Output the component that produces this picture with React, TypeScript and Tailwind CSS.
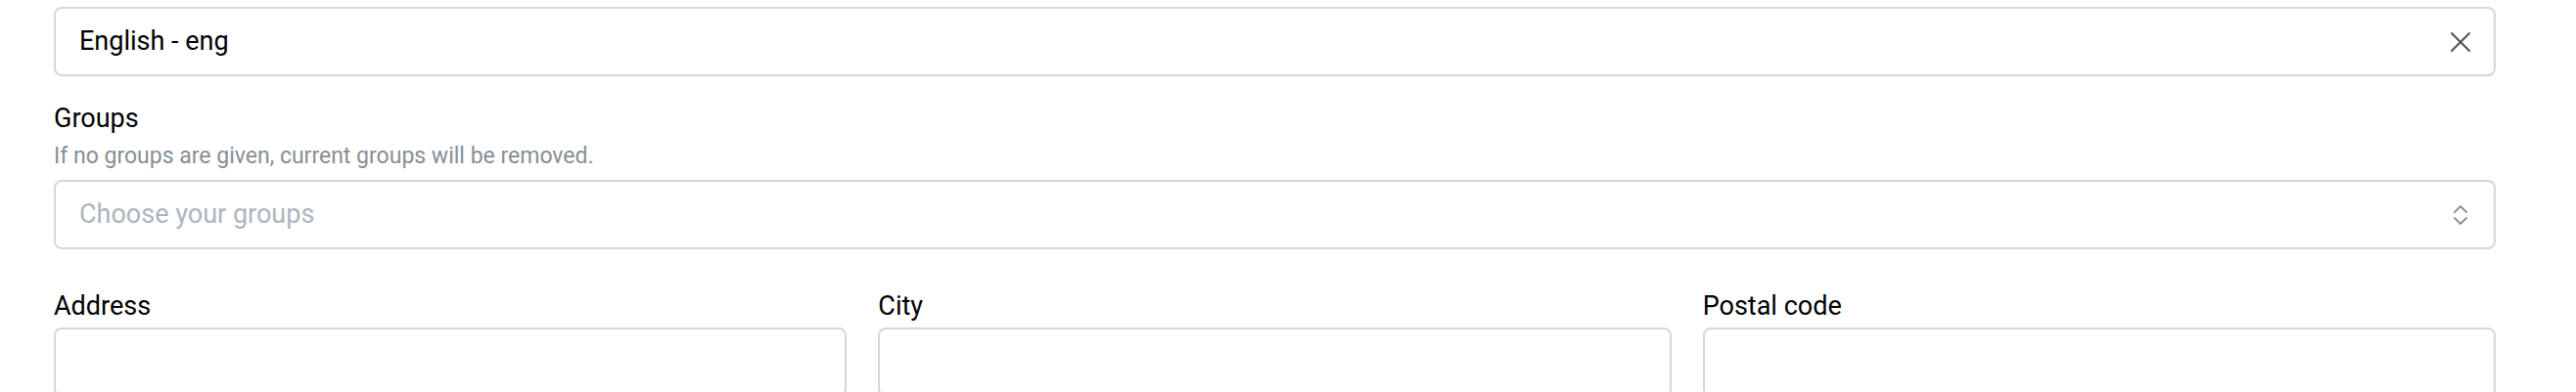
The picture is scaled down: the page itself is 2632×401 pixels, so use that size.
import { X } from 'lucide-react';

function SelectorIcon() {
  return (
    <svg width="14" height="22" viewBox="0 0 14 22" fill="none" stroke="#868e96" strokeWidth="1.8" strokeLinecap="round" strokeLinejoin="round">
      <polyline points="1,8 7,2 13,8" />
      <polyline points="1,14 7,20 13,14" />
    </svg>
  );
}

function FieldBox({ children }: { children?: React.ReactNode }) {
  return (
    <div className="h-[71px] border-2 border-[#d3d7dc] rounded-[8px] bg-white flex items-center justify-between pl-[24px] pr-[16px] text-[27px]">
      {children}
    </div>
  );
}

function Label({ text }: { text: string }) {
  return <label className="block text-[27px] leading-[36px] font-normal text-black">{text}</label>;
}

export default function App() {
  return (
    <div className="min-h-screen w-full bg-white" style={{ fontFamily: 'Roboto, "Noto Sans", sans-serif' }}>
      <div className="ml-[55px] w-[2495px] pt-[7px] flex flex-col">
        {/* Language */}
        <FieldBox>
          <span className="text-black">English - eng</span>
          <span className="w-[36px] flex items-center justify-center">
            <X size={36} strokeWidth={1.3} className="text-[#495057]" />
          </span>
        </FieldBox>

        {/* Groups */}
        <div className="mt-[25px] flex flex-col">
          <Label text="Groups" />
          <p className="mt-[6px] text-[23px] leading-[30px] text-[#868e96]">If no groups are given, current groups will be removed.</p>
          <div className="mt-[9px]">
            <FieldBox>
              <span className="text-[#adb5bd]">Choose your groups</span>
              <span className="w-[36px] flex items-center justify-center">
                <SelectorIcon />
              </span>
            </FieldBox>
          </div>
        </div>

        {/* Address row */}
        <div className="mt-[40px] grid grid-cols-3 gap-[32px]">
          {['Address', 'City', 'Postal code'].map(name => (
            <div key={name} className="flex flex-col">
              <Label text={name} />
              <div className="mt-[4px]">
                <FieldBox />
              </div>
            </div>
          ))}
        </div>
      </div>
    </div>
  );
}
